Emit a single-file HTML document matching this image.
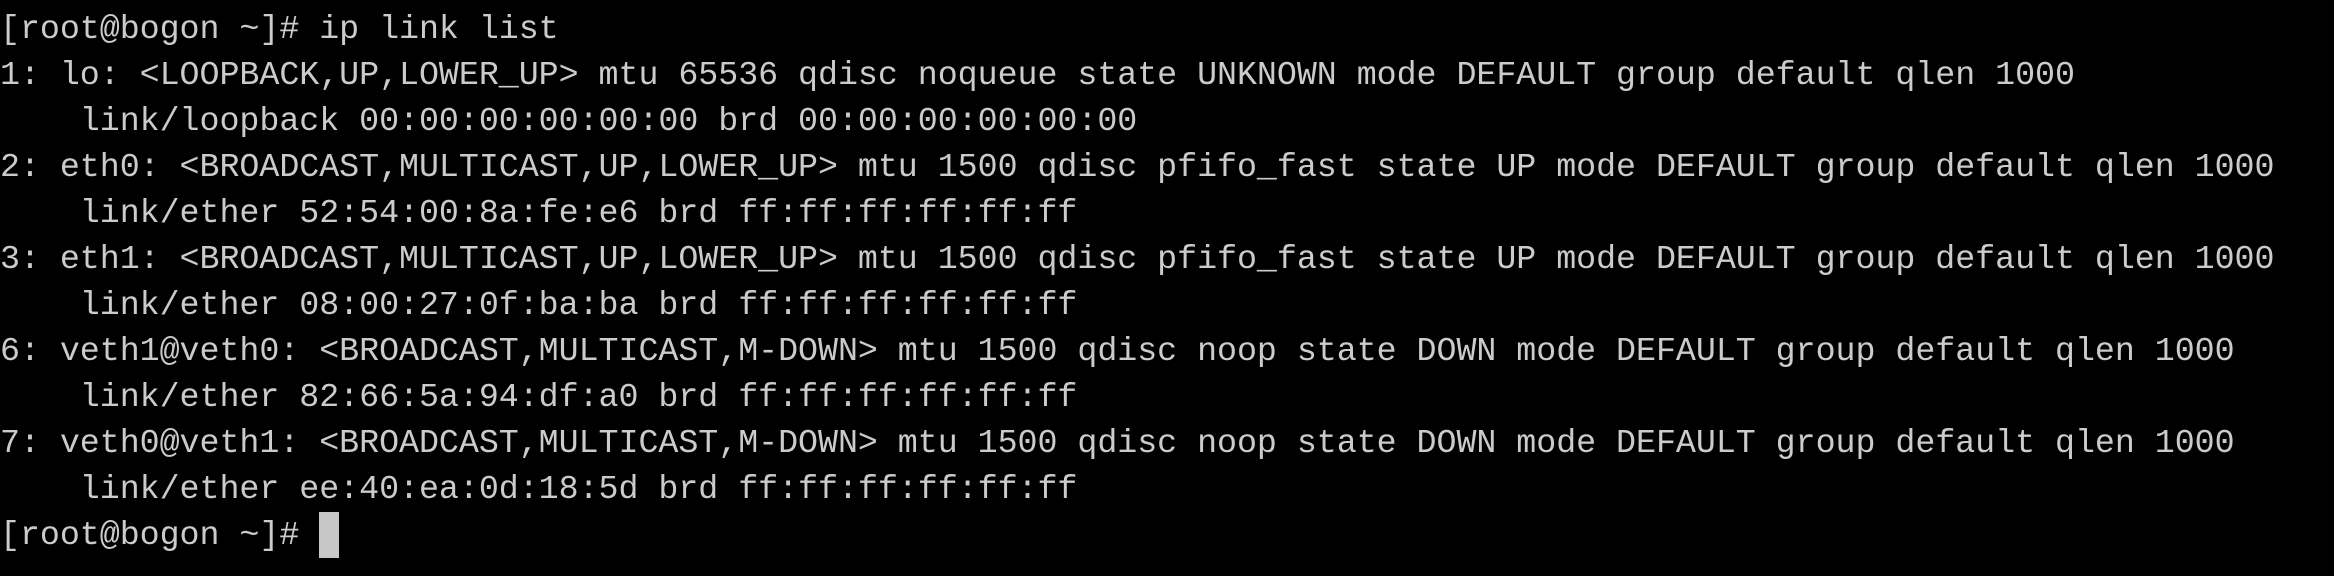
<!DOCTYPE html>
<html><head><style>
html,body{margin:0;padding:0;background:#000;width:2334px;height:576px;overflow:hidden}
pre{margin:0;position:absolute;left:0;top:6px;font-family:"Liberation Mono",monospace;font-size:33.3px;letter-spacing:-0.03px;line-height:46px;color:#cbcbcb;white-space:pre}
.c{display:inline-block;width:20px;height:46px;background:#c7c7c7;vertical-align:top}
</style></head><body><pre>[root@bogon ~]# ip link list
1: lo: &lt;LOOPBACK,UP,LOWER_UP&gt; mtu 65536 qdisc noqueue state UNKNOWN mode DEFAULT group default qlen 1000
    link/loopback 00:00:00:00:00:00 brd 00:00:00:00:00:00
2: eth0: &lt;BROADCAST,MULTICAST,UP,LOWER_UP&gt; mtu 1500 qdisc pfifo_fast state UP mode DEFAULT group default qlen 1000
    link/ether 52:54:00:8a:fe:e6 brd ff:ff:ff:ff:ff:ff
3: eth1: &lt;BROADCAST,MULTICAST,UP,LOWER_UP&gt; mtu 1500 qdisc pfifo_fast state UP mode DEFAULT group default qlen 1000
    link/ether 08:00:27:0f:ba:ba brd ff:ff:ff:ff:ff:ff
6: veth1@veth0: &lt;BROADCAST,MULTICAST,M-DOWN&gt; mtu 1500 qdisc noop state DOWN mode DEFAULT group default qlen 1000
    link/ether 82:66:5a:94:df:a0 brd ff:ff:ff:ff:ff:ff
7: veth0@veth1: &lt;BROADCAST,MULTICAST,M-DOWN&gt; mtu 1500 qdisc noop state DOWN mode DEFAULT group default qlen 1000
    link/ether ee:40:ea:0d:18:5d brd ff:ff:ff:ff:ff:ff
[root@bogon ~]# <span class="c"></span></pre></body></html>
